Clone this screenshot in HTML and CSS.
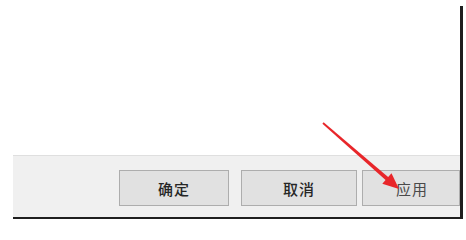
FILE: index.html
```html
<!DOCTYPE html>
<html lang="zh">
<head>
<meta charset="utf-8">
<link rel="stylesheet" href="styles.css">
</head>
<body>
<div class="window">
  <div class="content"></div>
  <div class="footer">
    <button class="btn btn-ok">确定</button>
    <button class="btn btn-cancel">取消</button>
    <button class="btn btn-apply">应用</button>
  </div>
</div>
<svg class="arrow" width="466" height="224" viewBox="0 0 466 224">
  <polygon points="322.4,123.7 323.6,122.3 389.3,178 386.7,181" fill="#e8262a"/>
  <polygon points="399,189 382.3,183.8 391.5,173.2" fill="#e8262a"/>
</svg>
</body>
</html>
```
FILE: styles.css
```css
html, body {
  margin: 0;
  padding: 0;
  background: #ffffff;
  width: 466px;
  height: 224px;
  overflow: hidden;
  position: relative;
}
.window {
  margin: 6px 0 0 13px;
  width: 447px;
  border-right: 3px solid #1f1f1f;
  border-bottom: 2px solid #1f1f1f;
  display: flex;
  flex-direction: column;
}
.content {
  height: 149px;
  background: #ffffff;
}
.footer {
  height: 62px;
  background: #f0f0f0;
  border-top: 1px solid #dfdfdf;
  display: flex;
  align-items: flex-start;
  justify-content: flex-end;
  padding-top: 14px;
  box-sizing: border-box;
}
.btn {
  height: 36px;
  margin: 0;
  padding: 0;
  background: #e1e1e1;
  border: 1px solid #adadad;
  font-family: "Noto Sans CJK SC", "Noto Sans", sans-serif;
  font-size: 15px;
  letter-spacing: 1px;
  color: #262626;
  font-weight: 500;
  box-sizing: border-box;
}
.btn-ok {
  width: 110px;
  margin-right: 12px;
}
.btn-cancel {
  width: 116px;
  margin-right: 5px;
}
.btn-apply {
  width: 98px;
  color: #4a4a4a;
  font-weight: 400;
  padding-left: 2px;
}
.arrow {
  position: absolute;
  left: 0;
  top: 0;
}
```
